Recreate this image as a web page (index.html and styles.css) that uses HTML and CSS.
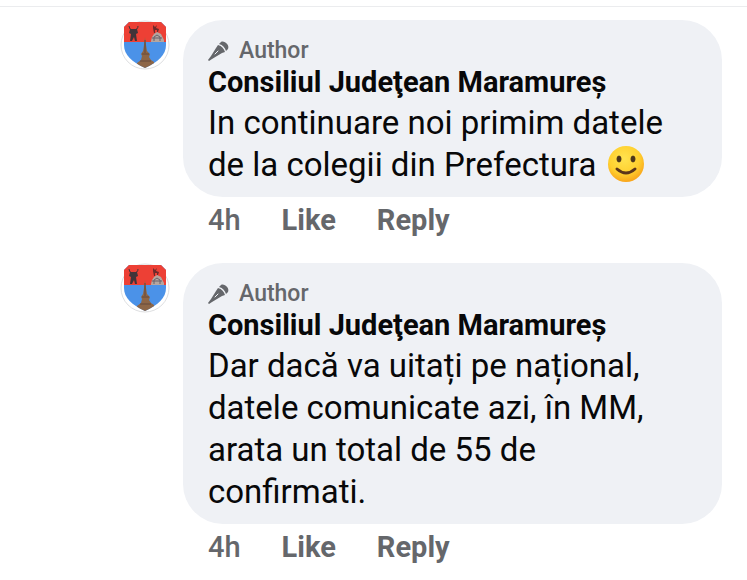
FILE: index.html
```html
<!DOCTYPE html>
<html lang="ro">
<head>
<meta charset="utf-8">
<title>Comments</title>
<link rel="stylesheet" href="styles.css">
</head>
<body>
<svg width="0" height="0" class="defs" aria-hidden="true">
  <defs>
    <clipPath id="shield"><path d="M9 2H41L46 7V25C46 35 38 42 25 48C12 42 4 35 4 25V7Z"/></clipPath>
    <radialGradient id="face" cx=".45" cy=".35" r=".65"><stop offset="0" stop-color="#ffe34f"/><stop offset=".65" stop-color="#ffd02f"/><stop offset="1" stop-color="#f9a51b"/></radialGradient>
    <symbol id="crest" viewBox="0 0 50 50">
      <circle cx="25" cy="25" r="24" fill="#fff" stroke="#dedfe1" stroke-width="1"/>
      <g clip-path="url(#shield)">
        <path fill="#4b92e8" d="M0 0h50v50H0z"/>
        <path fill="#ed4035" d="M0 0h50v22H0z"/>
        <path fill="#8d6647" d="M25 17l1 8 1 6 3 3-1 3 2 3 3 2v6H17v-5l4-3 1-4-1-2 2-3 1-6z"/>
        <path fill="none" stroke="#65493c" d="M22 34h7M20 41h11M25 20v13"/>
        <path fill="none" stroke="#423439" stroke-width="1" d="M9 6q0 4 4 4q5 0 5-4"/>
        <path fill="#423439" d="M10 9h7l1 4-2 1 1 7h-2l-1-4-2 4h-2l1-7-2-1z"/>
        <path fill="#6e2a2b" d="M33 5l2 2 2-2-1 3 3 1-1 3h-1v-2h-2v3h-1l-1-5z"/>
        <path fill="#b5a6a0" d="M31 21l1-4 2-3 3-2 4 2 3 6v2H31z"/>
        <path fill="none" stroke="#68616a" d="M34 21v-4l3-2 3 2v4M32 18h10"/>
      </g>
    </symbol>
    <symbol id="mic" viewBox="0 0 22 22">
      <path fill="#65676b" d="M13 2C16 0 22 5 20 9L18 11C17 8 15 5 11 4ZM10 5C14 6 16 9 17 12L14 13L4 19L1 21L0 20L3 16L8 8Z"/>
      <path d="M10 11l-3 3" stroke="#eff1f5" stroke-width="1" stroke-linecap="round"/>
    </symbol>
  </defs>
</svg>
<main class="thread">
  <article class="comment">
    <svg class="avatar" role="img" aria-label="Consiliul Județean Maramureș"><use href="#crest"/></svg>
    <div class="content">
      <div class="bubble">
        <div class="badge"><svg class="mic" aria-hidden="true"><use href="#mic"/></svg>Author</div>
        <a class="name" href="#">Consiliul Judeţean Maramureş</a>
        <p class="text">In continuare noi primim datele<br>de la colegii din Prefectura <svg class="emoji" viewBox="0 0 38 38" role="img" aria-label="Smile"><circle cx="19" cy="19" r="18" fill="url(#face)"/><ellipse cx="12" cy="14" rx="2" ry="3" fill="#4c351b" stroke="#4c351b"/><ellipse cx="26" cy="14" rx="2" ry="3" fill="#4c351b" stroke="#4c351b"/><path d="M10 24q9 8 18 0" fill="none" stroke="#5c351a" stroke-width="3" stroke-linecap="round"/></svg></p>
      </div>
      <footer class="actions"><time>4h</time><button type="button">Like</button><button type="button">Reply</button></footer>
    </div>
  </article>
  <article class="comment">
    <svg class="avatar" role="img" aria-label="Consiliul Județean Maramureș"><use href="#crest"/></svg>
    <div class="content">
      <div class="bubble">
        <div class="badge"><svg class="mic" aria-hidden="true"><use href="#mic"/></svg>Author</div>
        <a class="name" href="#">Consiliul Judeţean Maramureş</a>
        <p class="text">Dar dacă va uitați pe național,<br>datele comunicate azi, în MM,<br>arata un total de 55 de<br>confirmati.</p>
      </div>
      <footer class="actions"><time>4h</time><button type="button">Like</button><button type="button">Reply</button></footer>
    </div>
  </article>
</main>
</body>
</html>
```
FILE: styles.css
```css
* { box-sizing: border-box; }
body {
  margin: 0;
  background: #fff;
  color: #080809;
  font-family: Roboto, "Noto Sans", sans-serif;
}
.defs { position: absolute; }
.thread {
  display: flex;
  flex-direction: column;
  gap: 21px;
  margin-top: 6px;
  padding: 13px 25px 0 120px;
  border-top: 1px solid #ebecee;
}
.comment { display: flex; gap: 13px; }
.avatar { flex: none; width: 50px; height: 50px; }
.content { flex: 1; min-width: 0; }
.bubble {
  padding: 16px 25px 11px;
  border-radius: 40px;
  background: #eff1f5;
}
.badge {
  display: flex;
  align-items: center;
  gap: 9px;
  height: 29px;
  color: #65676b;
  font-size: 23px;
  font-weight: 500;
}
.mic { width: 22px; height: 22px; }
.name {
  display: block;
  color: inherit;
  font-size: 29px;
  font-weight: 700;
  line-height: 35px;
  text-decoration: none;
}
.text {
  margin: 2px 0 0;
  font-size: 33px;
  line-height: 42px;
}
.emoji { width: 38px; height: 38px; vertical-align: middle; margin: -6px 0 0 2px; }
.actions {
  display: flex;
  align-items: center;
  gap: 41px;
  height: 45px;
  padding-left: 25px;
  color: #65676b;
  font-size: 29px;
  font-weight: 500;
}
.actions button {
  padding: 0;
  border: 0;
  background: none;
  color: inherit;
  font: inherit;
  font-weight: 700;
}
```
